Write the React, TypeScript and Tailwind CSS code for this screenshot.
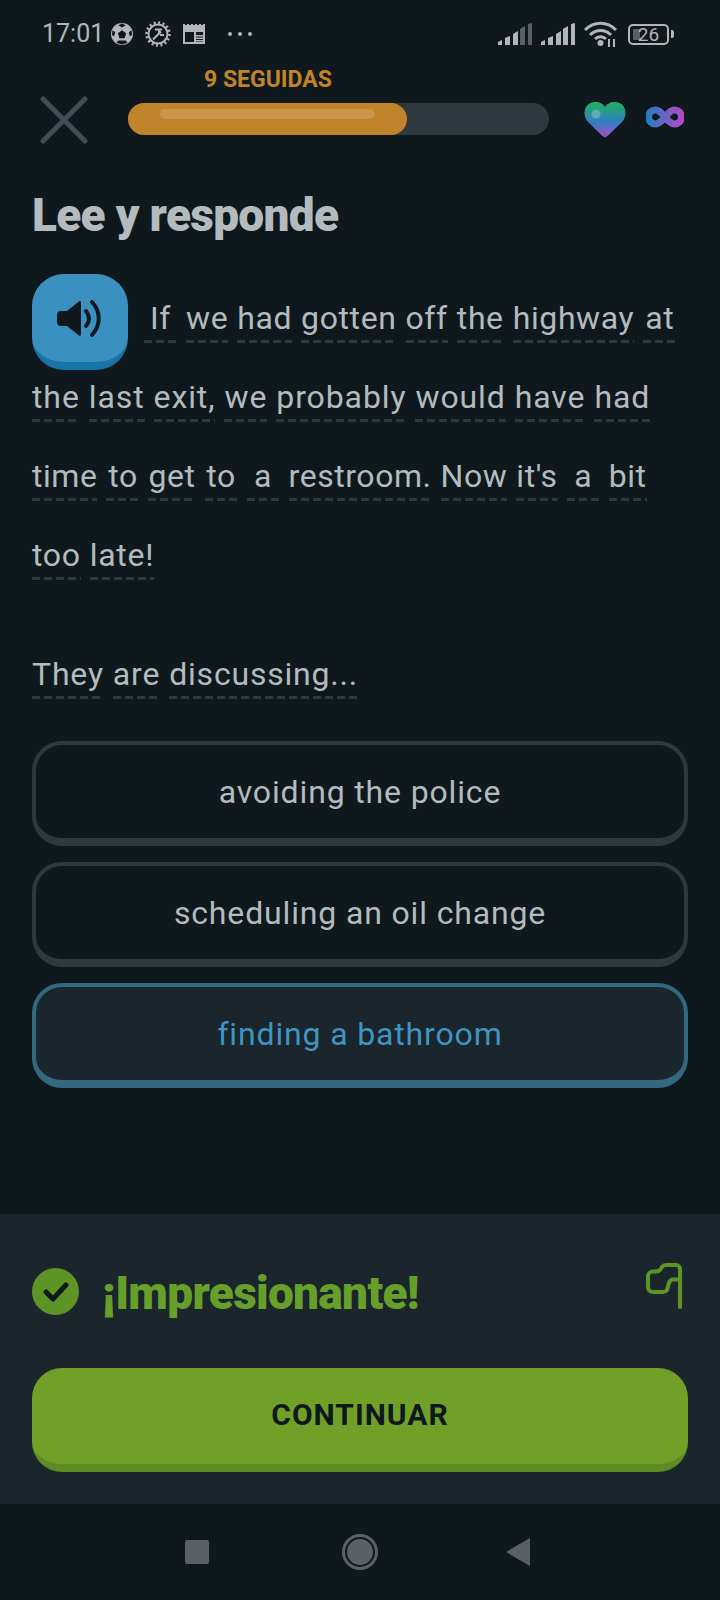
const BODY = "font-['Roboto',sans-serif]"
const HEAD = "font-['Roboto',sans-serif] font-black tracking-[-0.7px]"

function Word({ text }: { text: string }) {
  return (
    <span className="inline-block min-w-[33px] text-center whitespace-nowrap leading-[41px] pb-[4px] bg-[repeating-linear-gradient(90deg,#2d383f_0_8px,transparent_8px_12px)] bg-no-repeat bg-bottom bg-[length:100%_3px]">
      {text}
    </span>
  )
}

function Line({ text, className }: { text: string; className?: string }) {
  return (
    <div className={`flex items-end gap-[9px] ${className ?? ''}`}>
      {text.split(' ').map((w, i) => (
        <Word key={i} text={w} />
      ))}
    </div>
  )
}

function Option({ label, selected }: { label: string; selected?: boolean }) {
  return (
    <div
      className={[
        'h-[105px] rounded-[30px] border-4 border-b-8 flex items-center justify-center text-[32px] tracking-[0.85px]',
        selected ? 'border-[#33697f] bg-[#1a252c] text-[#3f95c2]' : 'border-[#2d383f] text-[#b4bbbf]',
      ].join(' ')}
    >
      {label}
    </div>
  )
}

function SignalBars({ dim }: { dim?: boolean }) {
  const off = dim ? '#5c6063' : '#b3b6b8'
  return (
    <svg width="34" height="22" viewBox="0 0 34 22" className="mr-[9px]">
      <path d="M0 22v-3l4-2v5z" fill="#b3b6b8" />
      <path d="M7 22v-7l5-2v9z" fill="#b3b6b8" />
      <path d="M15 22V11l5-3v14z" fill="#b3b6b8" />
      <path d="M22 22V6l5-3v19z" fill={off} />
      <path d="M30 22V1l4-1v22z" fill={off} />
    </svg>
  )
}

function StatusBar() {
  return (
    <div className="h-[68px] flex items-center pl-[42px] pr-[46px] text-[#b3b6b8] font-['Roboto',sans-serif]">
      <span className="text-[25px] w-[69px]">17:01</span>
      <svg width="22" height="22" viewBox="0 0 24 24" className="mr-[12px]">
        <circle cx="12" cy="12" r="12" fill="#b3b6b8" />
        <path d="M12 8l4.500 3.300-1.700 5.200H9.200L7.500 11.300z M12 0.500L8 2.500l4 2.500 4-2.500z M1.500 8L4.500 10l-1 4.500L1 13z M22.500 8L19.500 10l1 4.500 2.500-1.500z M6 21.500l2-2.500h8l2 2.500-6 2z" fill="#0f191d" />
      </svg>
      <svg width="26" height="26" viewBox="0 0 26 26" className="mr-[12px]" fill="none" stroke="#b3b6b8">
        <circle cx="13" cy="13" r="9.500" strokeWidth="2" />
        <circle cx="13" cy="13" r="11.500" strokeWidth="2.500" strokeDasharray="2 2.500" />
        <path d="M8 18.500l8-8M10 8.500h7M14 8.500v5M15 14h4" strokeWidth="2" />
      </svg>
      <svg width="22" height="20" viewBox="0 0 22 20" className="mr-[23px]" fill="none">
        <path d="M0 0h2v1h2V0h2v1h2V0h2v1h2V0h2v1h2V0h2v1h2V0h2v20H0z" fill="#b3b6b8" />
        <path d="M2 6h18v12H2z" fill="#0f191d" />
        <path d="M2 6h18v2H2zM11 8h2v10h-2zM13 11h7v1.500h-7zM13 13.500h7V15h-7zM13 16h7v1.500h-7z" fill="#b3b6b8" />
      </svg>
      <span className="flex gap-[6px]">
        <span className="w-[4px] h-[4px] rounded-full bg-[#b3b6b8]" />
        <span className="w-[4px] h-[4px] rounded-full bg-[#b3b6b8]" />
        <span className="w-[4px] h-[4px] rounded-full bg-[#b3b6b8]" />
      </span>
      <div className="ml-auto flex items-center">
        <SignalBars dim />
        <SignalBars />
        <svg width="33" height="26" viewBox="0 0 33 26" fill="none" stroke="#b3b6b8" strokeWidth="3" className="mr-[11px]">
          <path d="M1 9c9-9 22-9 31 0" />
          <path d="M6 14c6-6 15-6 21 0" />
          <path d="M11 18c3-3 8-3 11 0" />
          <circle cx="16.500" cy="22" r="1.500" fill="#b3b6b8" />
          <path d="M25 18v8M30 18v8" strokeWidth="2" />
        </svg>
        <div className="relative w-[41px] h-[21px] rounded-[5px] border-2 border-[#b3b6b8] flex items-center justify-center text-[19px] leading-none">
          <span className="absolute left-[3px] top-[3px] bottom-[3px] w-[7px] bg-[#5c6063] rounded-[1px]" />
          <span className="relative">26</span>
        </div>
        <span className="w-[3px] h-[8px] ml-[2px] rounded-r-[2px] bg-[#b3b6b8]" />
      </div>
    </div>
  )
}

export default function App() {
  return (
    <div className={`w-[720px] h-[1600px] bg-[#0f191d] flex flex-col ${BODY}`}>
      <StatusBar />

      {/* top bar */}
      <div className="h-[84px] flex pl-[40px] pr-[36px]">
        <svg width="48" height="48" viewBox="0 0 48 48" className="mt-[28px]" fill="none" stroke="#3f4e56" strokeWidth="5" strokeLinecap="round">
          <path d="M3 3l42 42M45 3L3 45" />
        </svg>
        <div className="ml-[40px] w-[421px]">
          <div className="h-[35px] pt-[1px] pl-[76px] font-bold text-[23px] leading-[22px] text-[#c1842b]">9 SEGUIDAS</div>
          <div className="h-[32px] rounded-full bg-[#2d383f]">
            <div className="h-full w-[279px] rounded-full bg-[#c1842b] pt-[6px] px-[32px]">
              <div className="h-[10px] rounded-full bg-[#c9954a]" />
            </div>
          </div>
        </div>
        <svg width="42" height="36" viewBox="0 0 42 36" className="ml-[35px] mt-[34px]">
          <defs>
            <linearGradient id="heart" x1="0" y1="0" x2="0" y2="1">
              <stop offset="0" stopColor="#1fb45c" />
              <stop offset="0.55" stopColor="#2f7fc0" />
              <stop offset="1" stopColor="#a44fc8" />
            </linearGradient>
          </defs>
          <path d="M18.500 34L4 20C-3 12 1 0 11 0c5 0 8 2 10 5 2-3 5-5 10-5 10 0 14 12 7 20L23.500 34c-1.500 1.500-3.500 1.500-5 0z" fill="url(#heart)" />
          <circle cx="12" cy="12" r="4.500" fill="#fff" opacity="0.25" />
        </svg>
        <svg width="38" height="22" viewBox="0 0 38 22" className="ml-[20px] mt-[38px]" fill="none" strokeWidth="7">
          <defs>
            <linearGradient id="inf" x1="0" y1="0" x2="38" y2="0" gradientUnits="userSpaceOnUse">
              <stop offset="0" stopColor="#1f7fc0" />
              <stop offset="1" stopColor="#b848c8" />
            </linearGradient>
          </defs>
          <path d="M19 11C15 6 12 4 9.500 4a7 7 0 000 14c2.500 0 5.500-2 9.500-7s7-7 9.500-7a7 7 0 010 14c-2.500 0-5.500-2-9.500-7z" stroke="url(#inf)" />
        </svg>
      </div>

      {/* exercise */}
      <div className="px-[32px] flex-1 flex flex-col">
        <h1 className={`mt-[35px] h-[55px] ${HEAD} text-[46px] leading-[56px] text-[#b4bbbf]`}>Lee y responde</h1>

        <div className="mt-[32px] text-[32px] tracking-[0.7px] text-[#b4bbbf]">
          <div className="flex items-end h-[69px]">
            <div className="self-start w-[96px] h-[96px] rounded-[32px] bg-[#3a90bf] border-b-8 border-[#1874a6] flex items-center justify-center shrink-0">
              <svg width="48" height="37" viewBox="0 0 48 37" fill="#0f191d">
                <path d="M5 11h6L23 1.500c1-.8 2-.3 2 1v32c0 1.300-1 1.800-2 1L11 26H5c-2.500 0-4-1.500-4-4v-7c0-2.500 1.500-4 4-4z" />
                <path d="M30 11c4 5 4 10 0 15M36 2c9 10 9 23 0 33" fill="none" stroke="#0f191d" strokeWidth="4" strokeLinecap="round" />
              </svg>
            </div>
            <Line text="If we had gotten off the highway at" className="ml-[16px] tracking-[0.6px]" />
          </div>
          <Line text="the last exit, we probably would have had" className="h-[79px] tracking-[0.9px]" />
          <Line text="time to get to a restroom. Now it's a bit" className="h-[79px] tracking-[0.55px]" />
          <Line text="too late!" className="h-[79px]" />
          <Line text="They are discussing..." className="mt-[40px] h-[79px] tracking-[0.8px]" />
        </div>

        <div className="mt-[42px] flex flex-col gap-[16px]">
          <Option label="avoiding the police" />
          <Option label="scheduling an oil change" />
          <Option label="finding a bathroom" selected />
        </div>
      </div>

      {/* feedback */}
      <div className="h-[290px] bg-[#1a252c] px-[32px] pt-[49px]">
        <div className="h-[105px] flex items-start">
          <svg width="47" height="47" viewBox="0 0 47 47" className="mt-[5px]">
            <circle cx="23.500" cy="23.500" r="23.500" fill="#5d9425" />
            <path d="M14 24l7 7 13-14" fill="none" stroke="#0f191d" strokeWidth="5" strokeLinecap="round" strokeLinejoin="round" />
          </svg>
          <span className={`ml-[23px] mt-[3px] ${HEAD} text-[46px] leading-[54px] text-[#679f2b]`}>¡Impresionante!</span>
          <svg width="38" height="46" viewBox="0 0 38 46" className="ml-auto mr-[4px]" fill="none" stroke="#5d9425" strokeWidth="4" strokeLinecap="round" strokeLinejoin="round">
            <path d="M34 44V6a4 4 0 00-4-4H20c-2 0-3 .7-4 2l-2 3c-1 1.300-2 1.500-4 1.500H7c-3 0-5 2-5 5V24c0 3 2 5 5 5h10c2 0 3-.7 4-2l2-7c.7-2 2-3.500 4-3.500h7" />
          </svg>
        </div>
        <div className="h-[104px] pb-[3px] rounded-[30px] bg-[#70a028] border-b-8 border-[#5d8c23] flex items-center justify-center font-bold text-[30px] tracking-[1px] text-[#0f191d]">
          CONTINUAR
        </div>
      </div>

      {/* android nav */}
      <div className="h-[96px] pr-[5px] flex items-center justify-center">
        <span className="w-[24px] h-[24px] rounded-[2px] bg-[#5b6065]" />
        <span className="ml-[133px] mr-[128px] w-[36px] h-[36px] rounded-full border-[3px] border-[#5b6065] p-[2px] flex">
          <span className="flex-1 rounded-full bg-[#5b6065]" />
        </span>
        <svg width="24" height="28" viewBox="0 0 24 28">
          <path d="M24 0v28L0 14z" fill="#5b6065" />
        </svg>
      </div>
    </div>
  )
}
